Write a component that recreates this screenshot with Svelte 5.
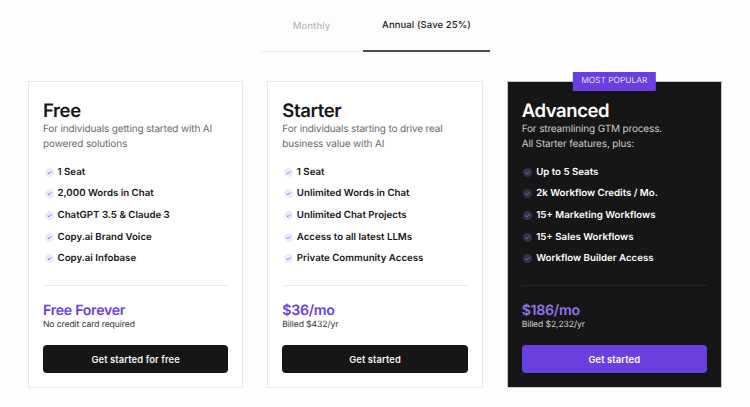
<script>
	const plans = [
		{
			name: 'Free',
			desc: ['For individuals getting started with AI', 'powered solutions'],
			features: ['1 Seat', '2,000 Words in Chat', 'ChatGPT 3.5 & Claude 3', 'Copy.ai Brand Voice', 'Copy.ai Infobase'],
			price: 'Free Forever',
			note: 'No credit card required',
			cta: 'Get started for free'
		},
		{
			name: 'Starter',
			desc: ['For individuals starting to drive real', 'business value with AI'],
			features: ['1 Seat', 'Unlimited Words in Chat', 'Unlimited Chat Projects', 'Access to all latest LLMs', 'Private Community Access'],
			price: '$36/mo',
			note: 'Billed $432/yr',
			cta: 'Get started'
		},
		{
			name: 'Advanced',
			desc: ['For streamlining GTM process.', 'All Starter features, plus:'],
			features: ['Up to 5 Seats', '2k Workflow Credits / Mo.', '15+ Marketing Workflows', '15+ Sales Workflows', 'Workflow Builder Access'],
			price: '$186/mo',
			note: 'Billed $2,232/yr',
			cta: 'Get started',
			dark: true
		}
	];
</script>

<main class="page">
	<div class="tabs">
		<div class="tab monthly">Monthly</div>
		<div class="tab annual">Annual (Save 25%)</div>
	</div>

	<div class="cards">
		{#each plans as plan}
			<section class="card" class:dark={plan.dark}>
				{#if plan.dark}
					<div class="badge">MOST POPULAR</div>
				{/if}
				<h2>{plan.name}</h2>
				<p class="desc">{plan.desc[0]}<br />{plan.desc[1]}</p>
				<ul>
					{#each plan.features as feature}
						<li>
							<svg class="check" viewBox="0 0 10 10" width="9" height="9" aria-hidden="true">
								<circle class="dot" cx="5" cy="5" r="5" />
								<path class="tick" d="M3 5.1 4.4 6.4 7 3.8" />
							</svg>
							<span>{feature}</span>
						</li>
					{/each}
				</ul>
				<div class="rule"></div>
				<div class="price">{plan.price}</div>
				<div class="note">{plan.note}</div>
				<button>{plan.cta}</button>
			</section>
		{/each}
	</div>
</main>

<style>
	:global(body) {
		background: #fdfdfd;
		font-family: Inter, "Liberation Sans", sans-serif;
		text-rendering: geometricPrecision;
	}
	.page {
		padding: 0 28px;
	}
	.tabs {
		display: flex;
		justify-content: center;
		height: 52px;
	}
	.tab {
		display: flex;
		align-items: center;
		justify-content: center;
		box-sizing: border-box;
		height: 52px;
		padding-top: 1px;
		font-size: 9.5px;
		font-weight: 500;
		letter-spacing: 0.1px;
	}
	.monthly {
		width: 103px;
		color: #b9b9b9;
		border-bottom: 1px solid #ececec;
	}
	.annual {
		width: 127px;
		color: #1a1a1a;
		border-bottom: 2px solid #4d4d4d;
	}
	.cards {
		display: grid;
		grid-template-columns: repeat(3, 1fr);
		gap: 24px;
		margin-top: 29px;
	}
	.card {
		position: relative;
		box-sizing: border-box;
		height: 307px;
		padding: 19px 14px 14px;
		background: #fff;
		border: 1px solid #e8e8e8;
		color: #161616;
	}
	.card.dark {
		background: #161616;
		border-color: #c4c4c4;
		border-bottom-color: #d0d0d0;
		color: #fff;
	}
	.badge {
		position: absolute;
		top: -10px;
		left: 50%;
		transform: translateX(-50%);
		padding: 0 8px;
		height: 19px;
		line-height: 19px;
		background: #6a3fe0;
		color: #e6defc;
		font-size: 8.4px;
		white-space: nowrap;
	}
	h2 {
		margin: 0;
		font-size: 18.5px;
		line-height: 21px;
		font-weight: 600;
		letter-spacing: -0.4px;
	}
	.desc {
		margin: 0;
		font-size: 10px;
		line-height: 14.5px;
		letter-spacing: -0.15px;
		color: #6b6b6b;
	}
	.dark .desc {
		color: #c9c9c9;
	}
	ul {
		list-style: none;
		margin: 10.5px 0 0;
		padding: 0 0 0 1.5px;
	}
	li {
		display: flex;
		align-items: center;
		gap: 4px;
		height: 21.6px;
		font-size: 9.7px;
		font-weight: 600;
	}
	.check {
		flex: none;
	}
	.dot {
		fill: #efeafb;
	}
	.tick {
		fill: none;
		stroke: #6a3fe0;
		stroke-width: 0.9;
	}
	.dark .dot {
		fill: #34324a;
	}
	.dark .tick {
		stroke: #9a7bf0;
	}
	.rule {
		height: 1px;
		margin-top: 15.5px;
		background: #ececec;
	}
	.dark .rule {
		background: #27272b;
	}
	.price {
		margin-top: 16px;
		font-size: 14.2px;
		line-height: 17px;
		font-weight: 600;
		letter-spacing: -0.3px;
		color: #6a3fe0;
	}
	.dark .price {
		color: #9373e8;
	}
	.note {
		font-size: 8.6px;
		line-height: 12px;
		letter-spacing: -0.1px;
		color: #333;
	}
	.dark .note {
		color: #d0d0d0;
	}
	button {
		display: block;
		width: 100%;
		height: 28px;
		margin-top: 14px;
		padding: 1px 0 0;
		border: 0;
		border-radius: 4px;
		background: #161616;
		color: #f4f4f4;
		font-family: inherit;
		font-size: 9.4px;
		font-weight: 600;
		letter-spacing: 0.1px;
	}
	.dark button {
		background: #6a3fe0;
		color: #fff;
	}
</style>
